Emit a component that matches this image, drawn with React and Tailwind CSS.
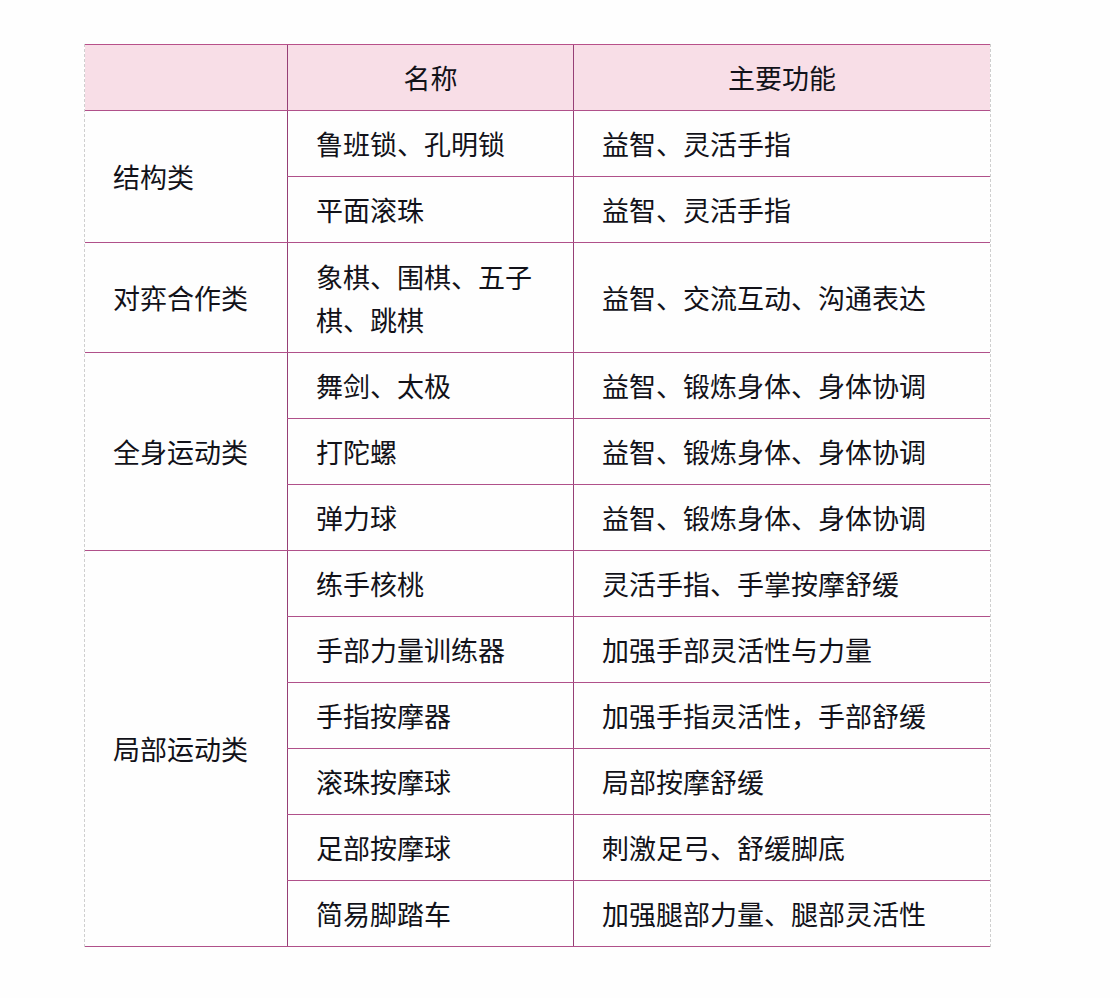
import React from "react"

const groups = [
  {
    category: "结构类",
    items: [
      ["鲁班锁、孔明锁", "益智、灵活手指"],
      ["平面滚珠", "益智、灵活手指"],
    ],
  },
  {
    category: "对弈合作类",
    items: [["象棋、围棋、五子棋、跳棋", "益智、交流互动、沟通表达"]],
  },
  {
    category: "全身运动类",
    items: [
      ["舞剑、太极", "益智、锻炼身体、身体协调"],
      ["打陀螺", "益智、锻炼身体、身体协调"],
      ["弹力球", "益智、锻炼身体、身体协调"],
    ],
  },
  {
    category: "局部运动类",
    items: [
      ["练手核桃", "灵活手指、手掌按摩舒缓"],
      ["手部力量训练器", "加强手部灵活性与力量"],
      ["手指按摩器", "加强手指灵活性，手部舒缓"],
      ["滚珠按摩球", "局部按摩舒缓"],
      ["足部按摩球", "刺激足弓、舒缓脚底"],
      ["简易脚踏车", "加强腿部力量、腿部灵活性"],
    ],
  },
]

export default function App() {
  return (
    <div
      className="min-h-[998px] w-[1120px] bg-[#fefefe] pt-[44px] pl-[84px] text-[27px] leading-[43px] text-[#121219]"
      style={{ fontFamily: '"Noto Sans CJK SC", "Noto Sans", sans-serif' }}
    >
      {/* dashed outer edge left/right, solid pink top */}
      <div className="w-[907px] border-x border-dashed border-[#cfcfcf]">
        <div className="border-t border-solid border-[#b8508a]">
          <div className="flex h-[66px] border-b border-solid border-[#b0508a] bg-[#f8dee7]">
            <div className="w-[202px]" />
            <div className="flex w-[287px] items-center justify-center border-x border-solid border-[#963f76]">
              名称
            </div>
            <div className="flex flex-1 items-center justify-center">主要功能</div>
          </div>

          {groups.map((g) => (
            <div key={g.category} className="flex">
              <div className="flex w-[202px] items-center border-b border-solid border-[#b0508a] px-[28px]">
                {g.category}
              </div>
              <div className="flex flex-1 flex-col">
                {g.items.map(([name, fn]) => (
                  <div
                    key={name}
                    className={`flex border-b border-solid border-[#b0508a] ${
                      name.length > 8 ? "h-[110px]" : "h-[66px]"
                    }`}
                  >
                    <div className="flex w-[287px] items-center border-x border-solid border-x-[#963f76] px-[28px]">
                      {name}
                    </div>
                    <div className="flex flex-1 items-center px-[28px]">{fn}</div>
                  </div>
                ))}
              </div>
            </div>
          ))}
        </div>
      </div>
    </div>
  )
}
